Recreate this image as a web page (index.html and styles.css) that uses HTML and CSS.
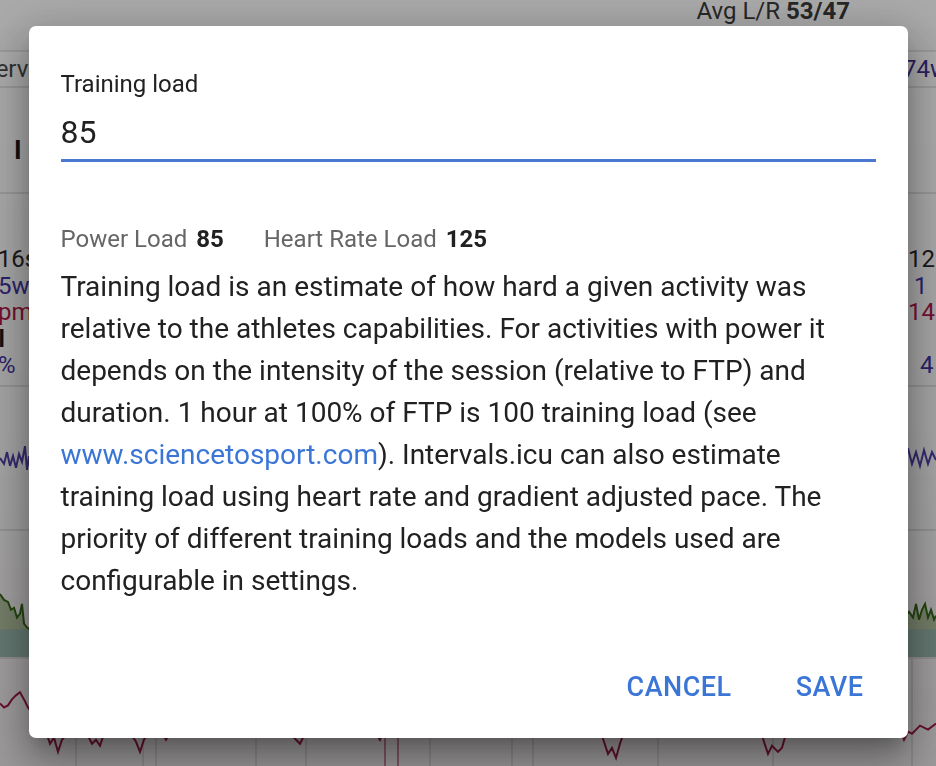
FILE: index.html
```html
<!DOCTYPE html>
<html lang="en">
<head>
    <meta charset="UTF-8">
    <meta name="viewport" content="width=device-width, initial-scale=1.0">
    <title>Training load</title>
    <link rel="stylesheet" href="styles.css">
</head>
<body>
    <!-- page behind the dialog -->
    <div class="page">
        <div class="row row-top">
            <span class="avg">Avg L/R <b>53/47</b></span>
        </div>
        <div class="row row-tabs">
            <span class="clip-left">Intervals</span>
            <span class="watts">274w</span>
        </div>
        <div class="row row-head">
            <span class="heading">I</span>
        </div>
        <div class="row row-stats">
            <div class="stats stats-left">
                <span>1h16s</span>
                <span class="purple">275w</span>
                <span class="red">1bpm</span>
                <span class="bold">11l</span>
                <span class="purple">83%</span>
            </div>
            <div class="stats stats-right">
                <span>12m</span>
                <span class="purple">&nbsp;1</span>
                <span class="red">140</span>
                <span>&nbsp;</span>
                <span class="purple">&nbsp;&nbsp;4</span>
            </div>
        </div>
        <div class="row row-chart">
            <svg class="chart" viewBox="0 0 936 144" preserveAspectRatio="none">
                <polyline fill="none" stroke="#4b3ba8" stroke-width="2" points="0,72 4,78 7,66 10,80 13,70 16,82 19,68 22,76 25,60 27,84 29,70 31,92 33,74 36,76 40,70 900,70 904,80 908,62 912,78 916,66 920,80 924,64 928,78 932,66 936,74"/>
            </svg>
        </div>
        <div class="row row-chart green-row">
            <svg class="chart" viewBox="0 0 936 128" preserveAspectRatio="none">
                <polygon fill="#b6c9a4" points="0,64 4,70 8,72 11,80 14,78 17,88 20,84 22,74 24,94 27,98 30,100 905,100 905,86 909,82 913,88 916,74 919,90 922,80 925,74 928,88 931,80 934,90 936,86 936,128 0,128"/>
                <rect x="0" y="100" width="936" height="28" fill="#9cc0b4"/>
                <polyline fill="none" stroke="#2f6a12" stroke-width="2" points="0,64 4,70 8,72 11,80 14,78 17,88 20,84 22,74 24,94 27,98 30,100 905,100 905,86 909,82 913,88 916,74 919,90 922,80 925,74 928,88 931,80 934,90 936,86"/>
            </svg>
        </div>
        <div class="row row-chart red-row">
            <svg class="chart" viewBox="0 0 936 106" preserveAspectRatio="none">
                <g stroke="#cfcbcd" stroke-width="1">
                    <line x1="76" y1="0" x2="76" y2="106"/><line x1="143" y1="0" x2="143" y2="106"/>
                    <line x1="156" y1="0" x2="156" y2="106"/><line x1="256" y1="0" x2="256" y2="106"/>
                    <line x1="306" y1="0" x2="306" y2="106"/><line x1="430" y1="0" x2="430" y2="106"/>
                    <line x1="512" y1="0" x2="512" y2="106"/><line x1="533" y1="0" x2="533" y2="106"/>
                    <line x1="658" y1="0" x2="658" y2="106"/><line x1="773" y1="0" x2="773" y2="106"/>
                    <line x1="912" y1="0" x2="912" y2="106"/>
                </g>
                <line x1="385" y1="60" x2="385" y2="106" stroke="#a3164a" stroke-width="1"/>
                <line x1="398" y1="60" x2="398" y2="106" stroke="#a3164a" stroke-width="1"/>
                <polyline fill="none" stroke="#a3164a" stroke-width="2" points="0,44 4,48 8,46 12,40 16,36 20,33 24,40 28,48 34,56 40,62 46,72 50,84 54,78 58,92 62,80 70,70 80,66 88,76 92,84 96,80 100,86 104,74 112,68 128,70 136,82 140,92 144,80 150,70 162,72 166,80 170,74 190,66 240,64 290,68 294,78 300,84 304,76 310,70 360,66 376,74 380,80 384,70 420,68 480,70 530,72 534,76 540,70 576,72 580,74 600,70 604,82 608,94 612,88 616,98 620,84 624,72 700,70 760,68 764,82 768,94 772,86 778,92 782,88 786,74 800,70 880,66 900,70 904,80 908,72 912,74 920,66 928,70 936,64"/>
            </svg>
        </div>
    </div>

    <div class="overlay">
        <div class="dialog">
            <label class="field">
                <span class="field-label">Training load</span>
                <input class="field-input" type="text" value="85">
            </label>

            <div class="loads">
                <span>Power Load <b>85</b></span>
                <span>Heart Rate Load <b>125</b></span>
            </div>

            <p class="desc">
                Training load is an estimate of how hard a given activity was
                relative to the athletes capabilities. For activities with power it
                depends on the intensity of the session (relative to FTP) and
                duration. 1 hour at 100% of FTP is 100 training load (see
                <a href="#">www.sciencetosport.com</a>). Intervals.icu can also estimate
                training load using heart rate and gradient adjusted pace. The
                priority of different training loads and the models used are
                configurable in settings.
            </p>

            <div class="actions">
                <button type="button">Cancel</button>
                <button type="button">Save</button>
            </div>
        </div>
    </div>
</body>
</html>
```

FILE: styles.css
```css
html, body {
    height: 100%;
}

body {
    font-family: 'Roboto', 'Liberation Sans', sans-serif;
    color: #212121;
    margin: 0;
    overflow: hidden;
    background-color: #ffffff;
}

/* page behind the dialog */
.page {
    display: flex;
    flex-direction: column;
    height: 100%;
    font-size: 24px;
}

.row {
    display: flex;
    justify-content: space-between;
    align-items: center;
    border-bottom: 2px solid #e4e4e4;
    overflow: hidden;
}

.row-top {
    height: 50px;
    justify-content: flex-end;
    align-items: flex-start;
    background-color: #fbfbfb;
}

.avg {
    margin-right: 86px;
    color: #333;
    line-height: 30px;
    margin-top: -4px;
}

.row-tabs {
    height: 34px;
}

.clip-left {
    margin-left: -32px;
    color: #444;
}

.watts {
    color: #3a2a8c;
    margin-right: -12px;
}

.row-head {
    height: 106px;
    padding-top: 20px;
    box-sizing: border-box;
}

.heading {
    margin-left: 14px;
    font-size: 26px;
    font-weight: 700;
    color: #111;
}

.row-stats {
    height: 191px;
    align-items: flex-start;
}

.stats {
    display: flex;
    flex-direction: column;
    padding-top: 52px;
    line-height: 26.5px;
}

.stats-left {
    margin-left: -29px;
}

.stats-right {
    margin-right: -20px;
    width: 48px;
}

.purple { color: #3b2ea0; }
.red { color: #b0103f; }
.bold { font-weight: 700; color: #111; }

.row-chart {
    height: 142px;
    display: block;
}

.green-row {
    height: 126px;
}

.red-row {
    flex: 1;
    border-bottom: none;
}

.chart {
    display: block;
    width: 100%;
    height: 100%;
}

/* modal */
.overlay {
    position: fixed;
    inset: 0;
    display: flex;
    align-items: center;
    justify-content: center;
    background: linear-gradient(180deg, rgba(20, 20, 20, 0.35) 0%, rgba(20, 18, 19, 0.38) 60%, rgba(20, 14, 16, 0.42) 100%);
}

.dialog {
    width: 879px;
    box-sizing: border-box;
    padding: 44px 32px 25px;
    margin-bottom: 2px;
    background-color: #ffffff;
    border-radius: 7px;
    box-shadow: 0 11px 15px -7px rgba(0, 0, 0, 0.2), 0 24px 38px 3px rgba(0, 0, 0, 0.24), 0 9px 46px 8px rgba(0, 0, 0, 0.16);
}

.field {
    display: flex;
    flex-direction: column;
}

.field-label {
    font-size: 24px;
    line-height: 28px;
    color: #212121;
}

.field-input {
    font-family: inherit;
    font-size: 32px;
    line-height: 38px;
    color: #212121;
    border: none;
    border-bottom: 3px solid #4a77d0;
    padding: 15px 0 8px;
    margin: 0;
    outline: none;
    background: transparent;
}

.loads {
    display: flex;
    gap: 40px;
    margin-top: 63px;
    font-size: 24px;
    line-height: 28px;
    color: #666666;
}

.loads b {
    color: #212121;
    font-weight: 700;
    margin-left: 3px;
}

.desc {
    margin: 13px 0 0;
    font-size: 28px;
    line-height: 42px;
}

.desc a {
    color: #3b76d6;
    text-decoration: none;
}

.actions {
    display: flex;
    justify-content: flex-end;
    gap: 40px;
    margin-top: 59px;
}

.actions button {
    font-family: inherit;
    font-size: 27px;
    line-height: 32px;
    font-weight: 500;
    letter-spacing: 0.5px;
    text-transform: uppercase;
    color: #3b76d6;
    background: none;
    border: none;
    padding: 10px 12px;
    cursor: pointer;
}
```
